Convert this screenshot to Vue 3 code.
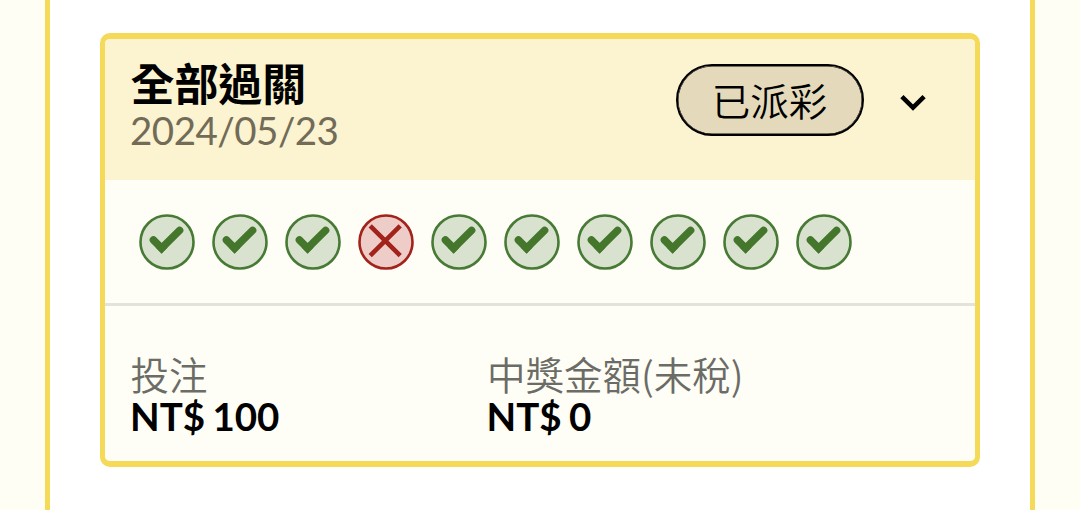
<script setup>
const legs = ['hit', 'hit', 'hit', 'miss', 'hit', 'hit', 'hit', 'hit', 'hit', 'hit']
const amounts = [
  { label: '投注', currency: 'NT$', value: '100' },
  { label: '中獎金額(未稅)', currency: 'NT$', value: '0' },
]
</script>

<template>
  <main class="page">
    <section class="panel">
      <article class="card">
        <header class="head">
          <div class="heading">
            <h2 class="title">全部過關</h2>
            <time class="date">2024/05/23</time>
          </div>
          <span class="status">已派彩</span>
          <svg class="chevron" viewBox="0 0 28 20">
            <path d="M2.9 3.7 L14 14.6 L25.1 3.7" />
          </svg>
        </header>
        <div class="legs">
          <svg v-for="(leg, i) in legs" :key="i" class="leg" :class="leg" viewBox="0 0 56 56">
            <circle cx="28" cy="28" r="26.5" />
            <g v-if="leg === 'hit'">
              <path class="tick" d="M14.4 26 L22.6 34.2 L40.6 16.4" />
              <path class="tip" d="M16.6 33.6 L22.6 39.8 L28.6 33.6 L22.6 31 Z" />
            </g>
            <path v-else class="cross" d="M12.2 11.8 L42.2 41.6 M42.2 11.8 L12.2 41.6" />
          </svg>
        </div>
        <dl class="amounts">
          <div v-for="item in amounts" :key="item.label" class="amount">
            <dt>{{ item.label }}</dt>
            <dd>{{ item.currency }} {{ item.value }}</dd>
          </div>
        </dl>
      </article>
    </section>
  </main>
</template>

<style>
html,
body {
  overflow: hidden;
  background: #fffef5;
}
</style>

<style scoped>
.page {
  display: flex;
  height: 510px;
  padding: 0 45px;
  font-family: Lato, "Noto Sans CJK TC", sans-serif;
  box-sizing: border-box;
  background: #fffef5;
}
.panel {
  flex: 1;
  padding: 33px 50px 0;
  background: #fff;
  border: solid #f5d958;
  border-width: 0 5px;
}
.card {
  height: 434px;
  box-sizing: border-box;
  overflow: hidden;
  background: #fffef6;
  border: solid #f5d958;
  border-width: 6px 5px;
  border-radius: 10px;
}
.head {
  display: flex;
  align-items: flex-start;
  height: 141px;
  padding: 0 48px 0 26px;
  box-sizing: border-box;
  background: #fcf3d0;
}
.heading {
  flex: 1;
  padding-top: 20px;
}
.title {
  margin: 0 0 0 -0.5px;
  font-size: 44px;
  line-height: 50px;
  font-weight: 700;
  letter-spacing: -0.1px;
  color: #000;
}
.date {
  display: block;
  margin-left: -1px;
  font-size: 38.5px;
  line-height: 42px;
  letter-spacing: -0.5px;
  color: #716b58;
}
.status {
  width: 188px;
  height: 72px;
  margin-top: 25px;
  box-sizing: border-box;
  border: 2px solid #000;
  border-radius: 36px;
  box-shadow: inset 0 0 0 0.5px #000;
  background: #e4dabb;
  font-size: 38.5px;
  font-weight: 350;
  line-height: 71px;
  text-align: center;
  color: #000;
}
.chevron {
  width: 28px;
  height: 20px;
  margin: 53.5px 0 0 35.5px;
  fill: none;
  stroke: #000;
  stroke-width: 4.6;
}
.legs {
  display: flex;
  gap: 17.05px;
  height: 126px;
  padding: 33.6px 0 0 34px;
  box-sizing: border-box;
  border-bottom: 3px solid #e3e2dc;
}
.leg {
  flex: none;
  width: 56px;
  height: 56px;
}
.leg circle {
  stroke-width: 2.6;
}
.hit circle {
  fill: #d9e2cf;
  stroke: #477a35;
}
.miss circle {
  fill: #eecdc8;
  stroke: #a2231c;
}
.tick {
  fill: none;
  stroke: #44762b;
  stroke-width: 7.5;
  stroke-linecap: round;
}
.tip {
  fill: #44762b;
}
.cross {
  fill: none;
  stroke: #a2231c;
  stroke-width: 4.6;
}
.amounts {
  display: flex;
  margin: 0;
  padding: 46px 0 0 25.5px;
}
.amount {
  width: 356.5px;
}
.amount dt {
  font-family: "Noto Sans CJK TC", sans-serif;
  font-size: 38.5px;
  font-weight: 350;
  line-height: 42px;
  white-space: nowrap;
  color: #6c6c67;
}
.amount dd {
  margin: 0 0 0 -0.5px;
  font-size: 38.5px;
  line-height: 44px;
  font-weight: 700;
  word-spacing: -2px;
  color: #000;
}
</style>
